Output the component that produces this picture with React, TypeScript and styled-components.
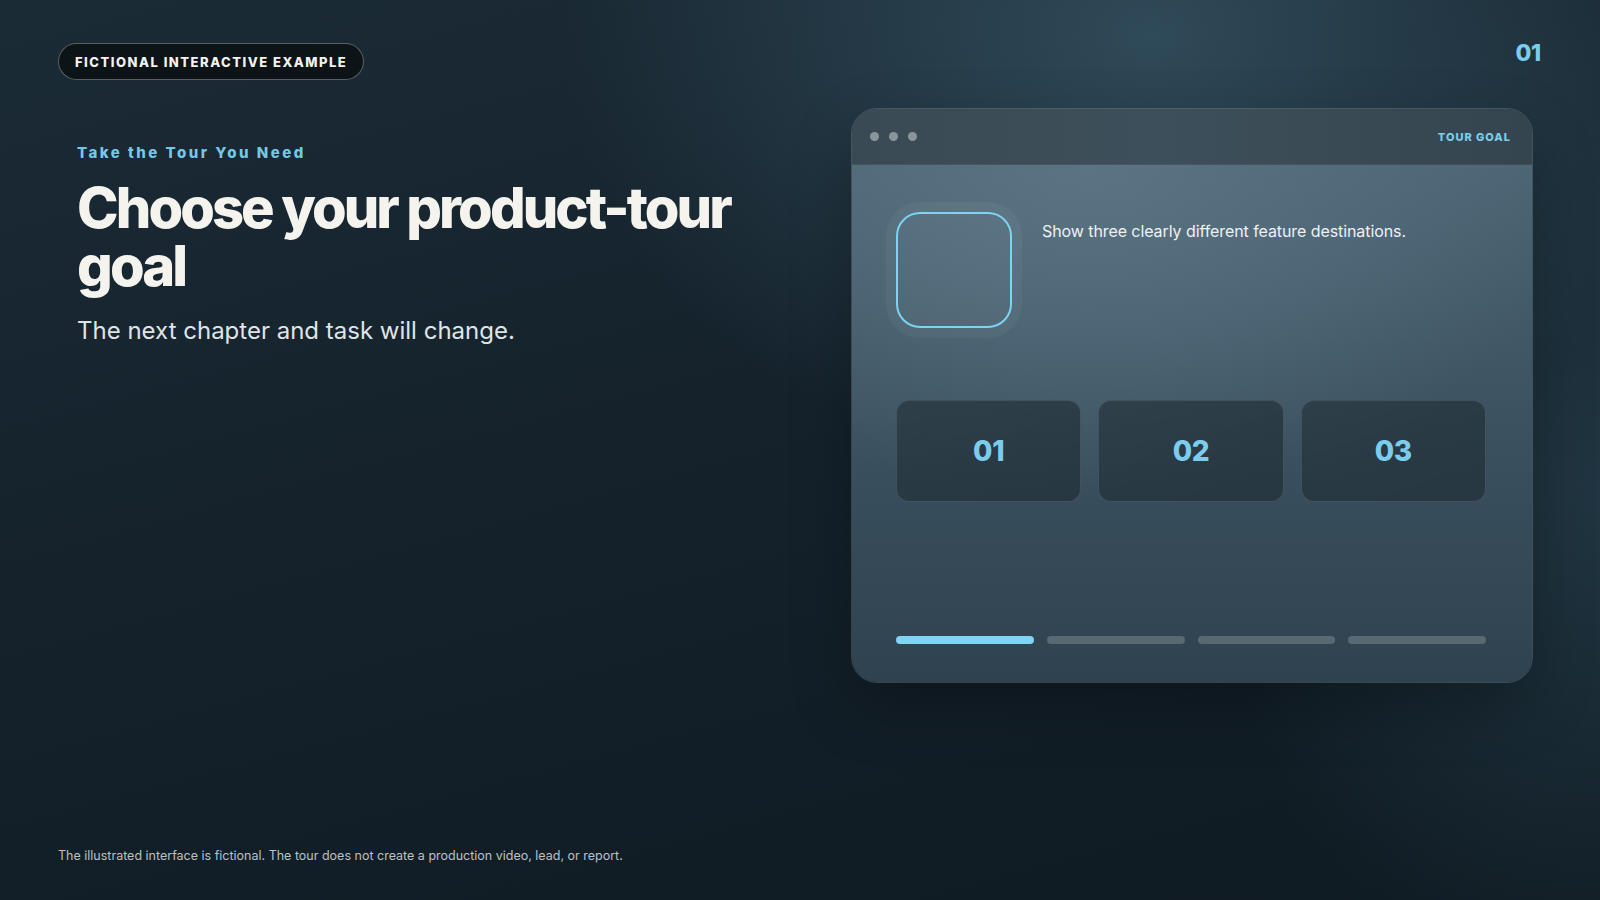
import React from "react";
import styled, { createGlobalStyle } from "styled-components";

const Global = createGlobalStyle`
  html, body { margin: 0; padding: 0; }
  body {
    background: #111c24;
    font-family: Inter, "Noto Sans", "Liberation Sans", sans-serif;
    -webkit-font-smoothing: antialiased;
  }
  * { box-sizing: border-box; }
`;

const Page = styled.main`
  width: 1600px;
  height: 900px;
  overflow: hidden;
  display: flex;
  flex-direction: column;
  padding: 43px 59px 35px 58px;
  background:
    radial-gradient(ellipse 820px 620px at 72% 4%, rgba(62, 96, 114, 0.62), rgba(62, 96, 114, 0) 72%),
    radial-gradient(ellipse 520px 700px at 100% 55%, rgba(50, 82, 98, 0.45), rgba(50, 82, 98, 0) 75%),
    linear-gradient(165deg, #1b2b36 0%, #15222c 45%, #0f1a21 100%);
  color: #f3f1ec;
`;

const TopBar = styled.header`
  display: flex;
  justify-content: space-between;
  align-items: flex-start;
`;

const Pill = styled.div`
  height: 37px;
  display: inline-flex;
  align-items: center;
  padding: 0 16px 0 16px;
  border-radius: 999px;
  border: 1px solid rgba(255, 255, 255, 0.32);
  background: #0d1418;
  color: #f2f2f0;
  font-size: 13px;
  font-weight: 800;
  letter-spacing: 0.115em;
  text-transform: uppercase;
`;

const SlideNum = styled.div`
  margin-top: -4px;
  font-size: 23px;
  font-weight: 800;
  color: #7ccdeb;
  letter-spacing: -0.01em;
`;

const Main = styled.section`
  display: grid;
  grid-template-columns: 1fr 682px;
  align-items: start;
  margin-top: 28px;
  padding-right: 8px;
`;

const Intro = styled.div`
  padding: 36px 0 0 19px;
  display: flex;
  flex-direction: column;
`;

const Eyebrow = styled.div`
  font-size: 15px;
  line-height: 18px;
  font-weight: 800;
  letter-spacing: 0.165em;
  color: #74c8e6;
`;

const Title = styled.h1`
  margin: 17px 0 0;
  font-size: 56px;
  line-height: 58px;
  font-weight: 800;
  letter-spacing: -0.052em;
  color: #f5f3ee;
  max-width: 680px;
`;

const Subtitle = styled.p`
  margin: 20px 0 0;
  font-size: 24px;
  line-height: 31px;
  font-weight: 400;
  color: #dfe4e7;
`;

const Card = styled.div`
  height: 575px;
  border-radius: 26px;
  border: 1px solid rgba(255, 255, 255, 0.16);
  overflow: hidden;
  display: flex;
  flex-direction: column;
  box-shadow: 0 24px 60px rgba(0, 0, 0, 0.25);
`;

const CardHeader = styled.div`
  height: 56px;
  flex: none;
  display: flex;
  align-items: center;
  justify-content: space-between;
  padding: 0 21px 0 18px;
  background: linear-gradient(90deg, #3a4a54 0%, #3d4f5a 45%, #35454f 100%);
  border-bottom: 1px solid rgba(255, 255, 255, 0.06);
`;

const Dots = styled.div`
  display: flex;
  gap: 10px;
`;

const Dot = styled.span`
  width: 9px;
  height: 9px;
  border-radius: 50%;
  background: #8a959b;
`;

const HeaderLabel = styled.div`
  font-size: 11px;
  font-weight: 800;
  letter-spacing: 0.09em;
  color: #7ccdeb;
`;

const CardBody = styled.div`
  flex: 1;
  display: flex;
  flex-direction: column;
  padding: 47px 46px 38px 44px;
  background:
    radial-gradient(ellipse 620px 420px at 35% 0%, rgba(92, 118, 134, 0.9), rgba(92, 118, 134, 0) 80%),
    linear-gradient(180deg, #4b6372 0%, #3a505e 55%, #2f424f 100%);
`;

const GoalRow = styled.div`
  display: flex;
  align-items: flex-start;
  gap: 30px;
`;

const Frame = styled.div`
  width: 116px;
  height: 116px;
  flex: none;
  border-radius: 24px;
  border: 2.5px solid #7dd3f2;
  background: rgba(255, 255, 255, 0.03);
  box-shadow: 0 0 0 10px rgba(255, 255, 255, 0.045);
`;

const GoalText = styled.p`
  margin: 9px 0 0;
  font-size: 16px;
  line-height: 20px;
  letter-spacing: -0.005em;
  color: #eef1f3;
`;

const Tiles = styled.div`
  margin-top: 72px;
  display: grid;
  grid-template-columns: repeat(3, 1fr);
  gap: 17px;
`;

const Tile = styled.div`
  height: 102px;
  border-radius: 13px;
  border: 1px solid rgba(255, 255, 255, 0.12);
  background: linear-gradient(160deg, rgba(40, 56, 66, 0.78), rgba(36, 50, 60, 0.82));
  display: flex;
  align-items: center;
  justify-content: center;
  font-size: 28px;
  font-weight: 800;
  color: #7ccdeb;
  letter-spacing: -0.01em;
`;

const Progress = styled.div`
  margin-top: auto;
  display: grid;
  grid-template-columns: repeat(4, 1fr);
  gap: 13px;
`;

const Bar = styled.div<{ $active?: boolean }>`
  height: 8px;
  border-radius: 4px;
  background: ${(p) => (p.$active ? "#80d4f6" : "rgba(150, 165, 172, 0.38)")};
`;

const Footer = styled.footer`
  margin-top: auto;
  font-size: 12.5px;
  line-height: 18px;
  color: #b9c1c6;
`;

export default function App() {
  return (
    <>
      <Global />
      <Page>
        <TopBar>
          <Pill>Fictional Interactive Example</Pill>
          <SlideNum>01</SlideNum>
        </TopBar>
        <Main>
          <Intro>
            <Eyebrow>Take the Tour You Need</Eyebrow>
            <Title>Choose your product-tour goal</Title>
            <Subtitle>The next chapter and task will change.</Subtitle>
          </Intro>
          <Card>
            <CardHeader>
              <Dots>
                <Dot />
                <Dot />
                <Dot />
              </Dots>
              <HeaderLabel>TOUR GOAL</HeaderLabel>
            </CardHeader>
            <CardBody>
              <GoalRow>
                <Frame />
                <GoalText>Show three clearly different feature destinations.</GoalText>
              </GoalRow>
              <Tiles>
                <Tile>01</Tile>
                <Tile>02</Tile>
                <Tile>03</Tile>
              </Tiles>
              <Progress>
                <Bar $active />
                <Bar />
                <Bar />
                <Bar />
              </Progress>
            </CardBody>
          </Card>
        </Main>
        <Footer>
          The illustrated interface is fictional. The tour does not create a production video, lead, or report.
        </Footer>
      </Page>
    </>
  );
}
